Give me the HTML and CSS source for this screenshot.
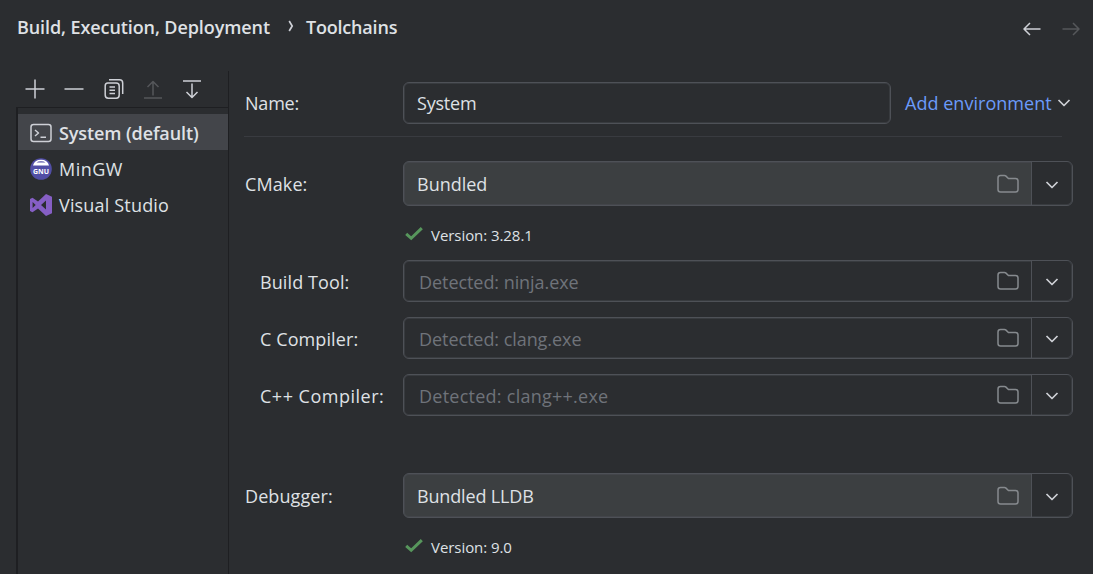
FILE: index.html
```html
<!DOCTYPE html>
<html lang="en">
<head>
<meta charset="utf-8">
<title>Toolchains</title>
<link rel="stylesheet" href="styles.css">
</head>
<body>
<svg class="defs" aria-hidden="true">
  <symbol id="folder" viewBox="0 0 22 20"><path d="M1 4Q1 1.5 3.5 1.5H7.5Q8.4 1.5 9 2.1L11.4 4.5H18.5Q21 4.5 21 7V15.5Q21 18 18.5 18H3.5Q1 18 1 15.5Z"/></symbol>
  <symbol id="chevron" viewBox="0 0 14 10"><path d="M1.5 2L7 7.5L12.5 2"/></symbol>
  <symbol id="check" viewBox="0 0 18 14"><path d="M1.2 6.8L6.2 11.3L16.8 1.2"/></symbol>
</svg>
<div class="window">
  <header class="header">
    <nav class="crumbs">
      <span class="crumb-parent">Build, Execution, Deployment</span>
      <svg class="crumb-arrow" viewBox="0 0 6 12"><path d="M1.2 1L4.2 6L1.2 11"/></svg>
      <span class="crumb-current">Toolchains</span>
    </nav>
    <div class="history">
      <svg class="icon arrow" viewBox="0 0 18 14"><path d="M17.5 7H1M7 1L1 7L7 13"/></svg>
      <svg class="icon arrow disabled" viewBox="0 0 18 14"><path d="M.5 7H17M11 1L17 7L11 13"/></svg>
    </div>
  </header>
  <div class="body">
    <aside class="sidebar">
      <div class="toolbar">
        <svg class="icon tool" viewBox="0 0 20 20"><path d="M10 .5V19.5M.5 10H19.5"/></svg>
        <svg class="icon tool" viewBox="0 0 20 20"><path d="M.5 10H19.5"/></svg>
        <svg class="icon tool" viewBox="0 0 20 20"><path d="M5 .8H15.5Q18.7 .8 18.7 4V15M3.8 4H12.2Q15.2 4 15.2 7V16Q15.2 19.2 12.2 19.2H4.2Q1.2 19.2 1.2 16V7Q1.2 4 3.8 4M5.5 8H11M5.5 11.3H11M5.5 14.6H11"/></svg>
        <svg class="icon tool disabled" viewBox="0 0 20 20"><path d="M1 19H19M10 16.5V3M4.5 8L10 2.5L15.5 8"/></svg>
        <svg class="icon tool" viewBox="0 0 20 20"><path d="M1 2H19M10 4.5V18M4.5 13L10 18.5L15.5 13"/></svg>
      </div>
      <ul class="list">
        <li class="item selected">
          <svg class="item-icon icon" viewBox="0 0 22 22"><rect x="1" y="2.6" width="20" height="17" rx="2.5"/><path d="M5 8L8.5 11L5 14M10.5 15.3H16"/></svg>
          <span class="bold-label">System (default)</span>
        </li>
        <li class="item">
          <svg class="item-icon" viewBox="0 0 22 22"><circle cx="11" cy="11" r="10.8" fill="#514ea5"/><path d="M3 7.4Q4.5 1.8 11 1.8T19 7.4Z" fill="#fff"/><path d="M6.5 4.6Q8 3.3 11 3.3T15.5 4.6Z" fill="#514ea5"/><text class="gnu" x="11" y="15.7" textLength="16" lengthAdjust="spacingAndGlyphs">GNU</text></svg>
          <span class="mingw">MinGW</span>
        </li>
        <li class="item">
          <svg class="item-icon" viewBox="0 0 22 22"><path d="M16 0L22 2.7V19.3L16 22L8 14.4L2.5 18.3L0 17V5L2.5 3.7L8 7.6ZM16 6.6L11 11L16 15.4ZM2.6 8V14L5.7 11Z" fill="#865fc5" fill-rule="evenodd"/></svg>
          <span class="visual">Visual Studio</span>
        </li>
      </ul>
    </aside>
    <main class="form">
      <div class="row name-row">
        <label class="label name">Name:</label>
        <div class="field name-field"><span class="system">System</span></div>
        <a class="add"><span class="add-text">Add environment</span><svg class="icon chevron"><use href="#chevron"/></svg></a>
      </div>
      <hr class="rule">
      <div class="row">
        <label class="label cmake">CMake:</label>
        <div class="field combo filled"><span class="value bundled">Bundled</span><svg class="icon folder"><use href="#folder"/></svg><span class="drop"><svg class="icon chevron"><use href="#chevron"/></svg></span></div>
      </div>
      <div class="status"><svg class="check"><use href="#check"/></svg><span class="version">Version: 3.28.1</span></div>
      <div class="tools">
        <div class="row">
          <label class="label sub build">Build Tool:</label>
          <div class="field combo"><span class="value ninja">Detected: ninja.exe</span><svg class="icon folder"><use href="#folder"/></svg><span class="drop"><svg class="icon chevron"><use href="#chevron"/></svg></span></div>
        </div>
        <div class="row">
          <label class="label sub c">C Compiler:</label>
          <div class="field combo"><span class="value clang">Detected: clang.exe</span><svg class="icon folder"><use href="#folder"/></svg><span class="drop"><svg class="icon chevron"><use href="#chevron"/></svg></span></div>
        </div>
        <div class="row">
          <label class="label sub cpp">C++ Compiler:</label>
          <div class="field combo"><span class="value clangpp">Detected: clang++.exe</span><svg class="icon folder"><use href="#folder"/></svg><span class="drop"><svg class="icon chevron"><use href="#chevron"/></svg></span></div>
        </div>
      </div>
      <div class="row debugger-row">
        <label class="label debugger">Debugger:</label>
        <div class="field combo filled"><span class="value lldb">Bundled LLDB</span><svg class="icon folder"><use href="#folder"/></svg><span class="drop"><svg class="icon chevron"><use href="#chevron"/></svg></span></div>
      </div>
      <div class="status"><svg class="check"><use href="#check"/></svg><span class="version">Version: 9.0</span></div>
    </main>
  </div>
</div>
</body>
</html>
```
FILE: styles.css
```css
* { box-sizing: border-box; }
body {
  margin: 0;
  background: #2b2d30;
  color: #dfe1e5;
  font: 18px/24px "Open Sans", "Noto Sans", sans-serif;
  white-space: nowrap;
  overflow: hidden;
}
.defs { display: none; }
svg { display: block; flex: none; }
.window { width: 1093px; height: 574px; display: flex; flex-direction: column; }
.header {
  height: 71px;
  padding: 15px 13px 0 17px;
  display: flex;
  justify-content: space-between;
}
.crumbs { display: flex; height: 24px; align-items: center; font-weight: 600; }
.crumb-parent { width: 271px; letter-spacing: -.09px; }
.crumb-current { letter-spacing: -.2px; }
.crumb-arrow { width: 6px; height: 12px; margin-right: 12px; fill: none; stroke: #ced0d6; stroke-width: 1.7; position: relative; top: -1px; }
.history { display: flex; height: 28px; align-items: center; gap: 21px; }
.icon { fill: none; stroke: #ced0d6; stroke-width: 1.5; stroke-linejoin: round; }
.icon.disabled { stroke: #55575a; }
.arrow { width: 18px; height: 14px; }
.body { flex: 1; display: flex; min-height: 0; }
.sidebar { width: 229px; border-right: 1px solid #1e1f22; padding-left: 16px; }
.toolbar { height: 36px; padding: 7.5px 0 0 9px; display: flex; gap: 19.3px; }
.tool { width: 20px; height: 20px; }
.list {
  height: 467px;
  margin: 0;
  padding: 6px 0 0;
  list-style: none;
  border: solid #1e1f22;
  border-width: 1px 0 0 2px;
}
.item { height: 36px; padding: 2px 0 0 12px; display: flex; align-items: center; gap: 7px; }
.item.selected { background: #43454a; }
.item-icon { width: 22px; height: 22px; }
.gnu { fill: #fff; font: 700 6.8px "Open Sans", sans-serif; text-anchor: middle; }
.bold-label { font-weight: 600; letter-spacing: -.1px; }
.mingw { letter-spacing: .5px; }
.visual { letter-spacing: .17px; }
.form { flex: 1; padding: 11px 20px 0 16px; }
.row { display: flex; align-items: center; }
.label { width: 158px; }
.sub { padding: 2px 0 0 15px; }
.name { letter-spacing: -.2px; }
.cmake, .build, .c, .debugger { letter-spacing: .1px; }
.cpp { letter-spacing: .5px; }
.field {
  height: 42px;
  border: 1px solid #4e5157;
  border-radius: 6px;
  box-shadow: inset 0 0 0 1px rgb(78 81 87 / 40%);
  display: flex;
  align-items: center;
  padding-left: 15px;
  color: #6f737a;
}
.name-field { width: 488px; padding-left: 13px; color: #dfe1e5; }
.system { letter-spacing: -.2px; }
.add { display: flex; align-items: center; margin-left: 14px; color: #6b9bfa; }
.add-text { width: 152px; letter-spacing: .03px; }
.chevron { width: 14px; height: 10px; stroke-width: 1.7; }
.rule { width: 818px; height: 1px; margin: 12px 0 24px -1px; border: 0; background: #393b40; }
.combo { width: 670px; }
.value { flex: 1; padding-top: 2px; }
.folder { width: 22px; height: 20px; margin-right: 12px; stroke: #868a8e; }
.drop {
  width: 41px;
  align-self: stretch;
  border-left: 1px solid #4e5157;
  padding-top: 2px;
  display: flex;
  align-items: center;
  justify-content: center;
  background: #2b2d30;
  border-radius: 0 5px 5px 0;
  box-shadow: inset -1px 0 rgb(78 81 87 / 40%), inset 0 -1px rgb(78 81 87 / 40%);
}
.ninja, .clang { letter-spacing: -.06px; }
.clangpp { letter-spacing: .25px; }
.lldb { letter-spacing: -.15px; }
.filled { height: 45px; padding-left: 13px; background: #3c3f41; color: #dfe1e5; }
.filled .value { padding-top: 0; }
.status {
  height: 22px;
  margin: 18px 0 14px 158px;
  padding-left: 1.5px;
  display: flex;
  align-items: center;
  gap: 8.5px;
  font-size: 15px;
  line-height: 22px;
}
.check { width: 18px; height: 14px; fill: none; stroke: #57965c; stroke-width: 3; position: relative; top: -1px; }
.version { letter-spacing: -.06px; }
.tools { display: flex; flex-direction: column; gap: 15px; }
.debugger-row { margin-top: 57px; }
```
